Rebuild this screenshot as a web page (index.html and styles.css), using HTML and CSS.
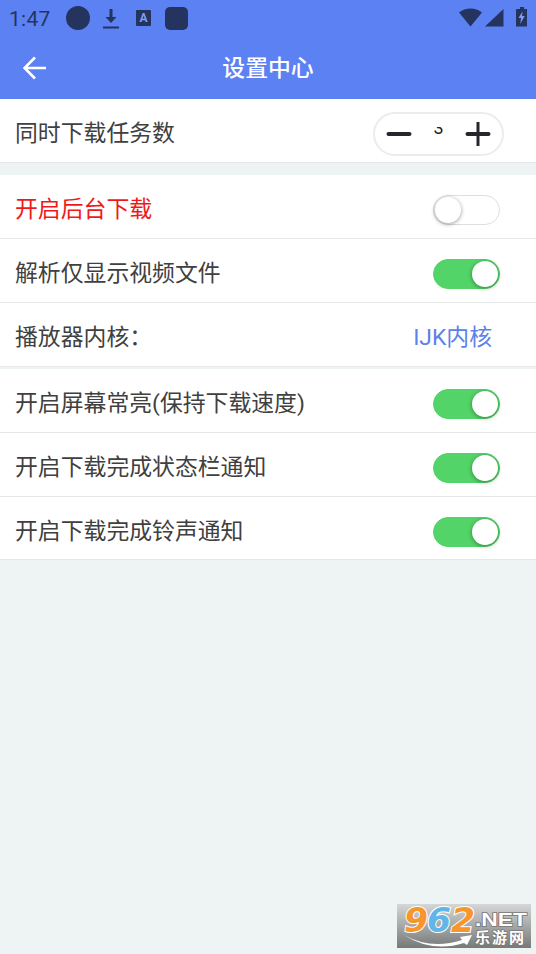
FILE: index.html
```html
<!DOCTYPE html>
<html lang="zh-CN">
  <head>
    <meta charset="utf-8">
    <title>设置中心</title>
    <link rel="stylesheet" href="styles.css">
  </head>
  <body>
    <header class="header">
      <div class="status-bar">
        <span class="time">1:47</span>
        <span class="dot"></span>
        <svg class="download" width="16" height="22" viewBox="0 0 16 22">
          <path d="M6.500 1h3v8h4L8 15 2.500 9h4zM0 18.500h16v2H0z" />
        </svg>
        <span class="lang">A</span>
        <span class="square"></span>
        <svg class="signals" width="68" height="22" viewBox="0 0 68 22">
          <path d="M0 5.500C6.500.3 16.500.3 23 5.500L11.500 19.500zM44.500 2v17.500H26zM58 2h3V0h4v2h3v17.500H57V3q0-1 1-1z" />
          <path class="bolt" d="M63.500 4.500l-4 6.500h2.600l-.9 6 4.500-8h-2.700z" />
        </svg>
      </div>
      <div class="title-bar">
        <svg class="back" width="24" height="24" viewBox="0 0 24 24">
          <path d="M23 12H2M12 1.500L1.500 12 12 22.500" />
        </svg>
        <h1>设置中心</h1>
      </div>
    </header>

    <main>
      <div class="row row-tasks">
        <span>同时下载任务数</span>
        <div class="stepper">
          <svg width="26" height="26" viewBox="0 0 26 26"><path d="M2.500 13h21" /></svg>
          <div class="count"><span>3</span></div>
          <svg width="26" height="26" viewBox="0 0 26 26"><path d="M2.500 13h21" /><path class="thin" d="M13 1v24" /></svg>
        </div>
      </div>
      <div class="row">
        <span class="warn">开启后台下载</span>
        <span class="switch"></span>
      </div>
      <div class="row">
        <span>解析仅显示视频文件</span>
        <span class="switch on"></span>
      </div>
      <div class="row row-player">
        <span>播放器内核：</span>
        <span class="value">IJK内核</span>
      </div>
      <div class="row">
        <span>开启屏幕常亮(保持下载速度)</span>
        <span class="switch on"></span>
      </div>
      <div class="row">
        <span>开启下载完成状态栏通知</span>
        <span class="switch on"></span>
      </div>
      <div class="row row-last">
        <span>开启下载完成铃声通知</span>
        <span class="switch on"></span>
      </div>
    </main>

    <div class="watermark">
      <svg width="134" height="44" viewBox="0 0 134 44">
        <defs>
          <linearGradient id="silver" x1="0" y1="0" x2="0" y2="1">
            <stop offset="0" stop-color="#d5d7d7" />
            <stop offset="1" stop-color="#777979" />
          </linearGradient>
        </defs>
        <rect width="134" height="44" fill="url(#silver)" />
        <path class="swoosh" d="M7 31Q34 46 65 36L63 33 75 31 70 41 67 39Q35 49 7 31z" />
        <g class="digits">
          <text x="7" y="28" textLength="24" lengthAdjust="spacingAndGlyphs" fill="#f8962c">9</text>
          <text x="30" y="28" textLength="24" lengthAdjust="spacingAndGlyphs" fill="#62b5e8">6</text>
          <text x="54" y="28" textLength="24" lengthAdjust="spacingAndGlyphs" fill="#f8962c">2</text>
        </g>
        <text class="net" x="78" y="22" textLength="52" lengthAdjust="spacingAndGlyphs">.NET</text>
        <text class="site" x="78" y="39" textLength="49">乐游网</text>
      </svg>
    </div>
  </body>
</html>
```
FILE: styles.css
```css
* {
  box-sizing: border-box;
}

body {
  margin: 0;
  height: 954px;
  overflow: hidden;
  background: #eef3f4;
  color: #404040;
  font-family: Roboto, "Noto Sans CJK SC", sans-serif;
  font-size: 22.85px;
}

.header {
  height: 99px;
  background: #5c81f2;
}

.status-bar {
  display: flex;
  align-items: center;
  height: 37px;
  padding-left: 9px;
  color: #25335f;
}

.status-bar svg {
  fill: #25335f;
}

.time {
  width: 57px;
  font-size: 21px;
  letter-spacing: 0.3px;
}

.dot {
  width: 24px;
  height: 24px;
  margin-top: -1px;
  border-radius: 50%;
  background: #25335f;
}

.download {
  margin-left: 13px;
}

.lang {
  width: 15px;
  height: 16px;
  margin-top: -1px;
  margin-left: 17px;
  border-radius: 1px;
  background: #25335f;
  color: #7f9cf0;
  font-size: 12px;
  font-weight: bold;
  line-height: 16px;
  text-align: center;
}

.square {
  width: 23px;
  height: 23px;
  margin-left: 14px;
  border-radius: 5px;
  background: #25335f;
}

.signals {
  margin-top: -2px;
  margin-left: auto;
  margin-right: 9px;
}

.status-bar .bolt {
  fill: #7d9bf2;
}

.title-bar {
  display: grid;
  grid-template-columns: 1fr auto 1fr;
  align-items: center;
  height: 62px;
  padding: 0 22px;
}

.title-bar h1 {
  margin: 0;
  padding-bottom: 5px;
  color: #fff;
  font-size: 22.85px;
  font-weight: 500;
}

.back {
  margin-left: 1px;
  fill: none;
  stroke: #fff;
  stroke-width: 2.6;
}

.row {
  display: flex;
  align-items: center;
  justify-content: space-between;
  height: 64px;
  padding: 3px 36px 0 15px;
  border-bottom: 1px solid #e6e8e8;
  background: #fff;
  line-height: 32px;
}

.row > span:first-child {
  padding-top: 3px;
}

.row-tasks {
  margin-bottom: 12px;
  padding-right: 32px;
}

.row-player {
  margin-bottom: 2px;
  padding-right: 44px;
}

.warn {
  color: #f01818;
}

.value {
  padding-top: 3px;
  color: #5c81e8;
}

.stepper {
  display: flex;
  align-items: center;
  justify-content: space-between;
  width: 131px;
  height: 44px;
  margin-top: 3px;
  padding: 0 11px;
  border: 2px solid #ececec;
  border-radius: 22px;
}

.stepper svg {
  fill: none;
  stroke: #26262e;
  stroke-width: 4;
  stroke-linecap: round;
}

.stepper .thin {
  stroke-width: 3;
  stroke-linecap: butt;
}

/* the field is shorter than the digit, so its top is cut off */
.count {
  display: flex;
  align-items: flex-end;
  height: 8px;
  margin-bottom: 5px;
  overflow: hidden;
  color: #222;
  font-size: 18px;
}

.count span {
  line-height: 15px;
}

.switch {
  display: flex;
  width: 67px;
  height: 30px;
  margin-top: 3px;
  padding: 1px;
  border: 1px solid #dedede;
  border-radius: 15px;
}

.switch::before {
  content: "";
  width: 26px;
  height: 26px;
  border-radius: 50%;
  background: #fff;
  box-shadow: 0 1px 4px rgba(0, 0, 0, 0.4);
}

.switch.on {
  justify-content: flex-end;
  border-color: #52d468;
  background: #52d468;
}

.row-last {
  height: 63px;
  padding-top: 4px;
}

.watermark {
  position: absolute;
  right: 5px;
  bottom: 6px;
  height: 44px;
}

.digits {
  font: italic bold 33px "DejaVu Sans", sans-serif;
  stroke: #fff;
  stroke-width: 2px;
  paint-order: stroke;
}

.swoosh {
  fill: #fff;
}

.net,
.site {
  fill: #fff;
  stroke: #777;
  stroke-width: 1.5px;
  paint-order: stroke;
}

.net {
  font: bold 18px "Liberation Sans", sans-serif;
}

.site {
  font: bold 15px "Noto Sans CJK SC", sans-serif;
}
```
